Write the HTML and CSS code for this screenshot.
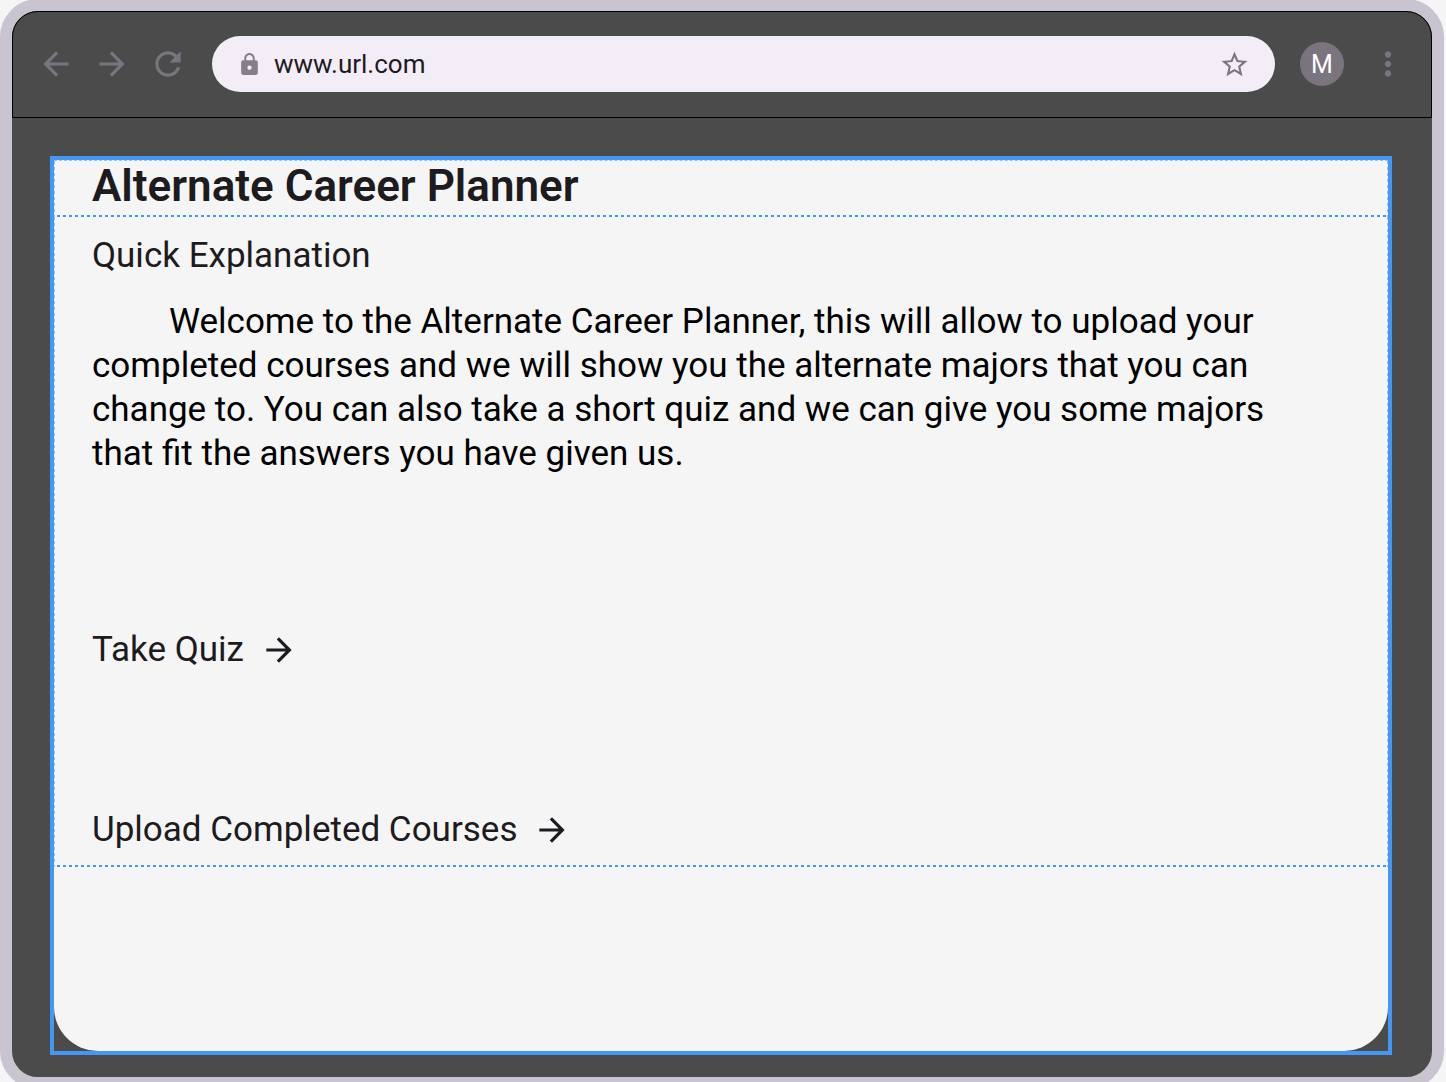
FILE: index.html
```html
<!DOCTYPE html>
<html lang="en">
<head>
<meta charset="utf-8">
<title>Alternate Career Planner</title>
<link rel="stylesheet" href="styles.css">
</head>
<body>
<div class="browser">
  <header class="toolbar">
    <nav class="nav" aria-label="Browser">
      <button class="icon-button" type="button" aria-label="Back"><svg class="icon" viewBox="0 0 24 24"><path d="M20 11H7.83l5.59-5.59L12 4l-8 8 8 8 1.41-1.41L7.83 13H20v-2z"/></svg></button>
      <button class="icon-button" type="button" aria-label="Forward"><svg class="icon" viewBox="0 0 24 24"><path d="M12 4l-1.41 1.41L16.17 11H4v2h12.17l-5.58 5.59L12 20l8-8z"/></svg></button>
      <button class="icon-button" type="button" aria-label="Reload"><svg class="icon" viewBox="0 0 24 24"><path d="M17.65 6.35C16.2 4.9 14.21 4 12 4c-4.42 0-7.99 3.58-7.99 8s3.57 8 7.99 8c3.73 0 6.84-2.55 7.73-6h-2.08c-.82 2.33-3.04 4-5.65 4-3.31 0-6-2.69-6-6s2.69-6 6-6c1.66 0 3.14.69 4.22 1.78L13 11h7V4l-2.35 2.35z"/></svg></button>
    </nav>
    <div class="address">
      <svg class="lock" viewBox="0 0 24 24"><path d="M18 8h-1V6c0-2.76-2.24-5-5-5S7 3.24 7 6v2H6c-1.1 0-2 .9-2 2v10c0 1.1.9 2 2 2h12c1.1 0 2-.9 2-2V10c0-1.1-.9-2-2-2zm-6 9c-1.1 0-2-.9-2-2s.9-2 2-2 2 .9 2 2-.9 2-2 2zm3.1-9H8.9V6c0-1.71 1.39-3.1 3.1-3.1s3.1 1.39 3.1 3.1v2z"/></svg>
      <input class="url" type="text" value="www.url.com" aria-label="Address">
      <button class="icon-button" type="button" aria-label="Bookmark"><svg class="star" viewBox="0 0 24 24"><path d="M22 9.24l-7.19-.62L12 2 9.19 8.63 2 9.24l5.46 4.73L5.82 21 12 17.27 18.18 21l-1.63-7.03L22 9.24zM12 15.4l-3.76 2.27 1-4.28-3.32-2.88 4.38-.38L12 6.1l1.71 4.04 4.38.38-3.32 2.88 1 4.28L12 15.4z"/></svg></button>
    </div>
    <button class="avatar" type="button">M</button>
    <button class="icon-button" type="button" aria-label="Menu"><svg class="icon" viewBox="0 0 24 24"><path d="M12 8c1.1 0 2-.9 2-2s-.9-2-2-2-2 .9-2 2 .9 2 2 2zm0 2c-1.1 0-2 .9-2 2s.9 2 2 2 2-.9 2-2-.9-2-2-2zm0 6c-1.1 0-2 .9-2 2s.9 2 2 2 2-.9 2-2-.9-2-2-2z"/></svg></button>
  </header>
  <main class="viewport">
    <div class="page">
      <div class="heading"><h1 class="title">Alternate Career Planner</h1></div>
      <div class="content">
        <h2 class="label">Quick Explanation</h2>
        <p class="intro">Welcome to the Alternate Career Planner, this will allow to upload your completed courses and we will show you the alternate majors that you can change to. You can also take a short quiz and we can give you some majors that fit the answers you have given us.</p>
        <div class="links">
          <a class="link" href="#quiz">Take Quiz <svg class="icon" viewBox="0 0 24 24"><path d="M12 4l-1.41 1.41L16.17 11H4v2h12.17l-5.58 5.59L12 20l8-8z"/></svg></a>
          <a class="link" href="#upload">Upload Completed Courses <svg class="icon" viewBox="0 0 24 24"><path d="M12 4l-1.41 1.41L16.17 11H4v2h12.17l-5.58 5.59L12 20l8-8z"/></svg></a>
        </div>
      </div>
    </div>
  </main>
</div>
</body>
</html>
```
FILE: styles.css
```css
* { box-sizing: border-box; }
html { background: #f5f5f5; }
body {
  margin: 0;
  height: 100vh;
  overflow: hidden;
  font-family: Roboto, "Liberation Sans", sans-serif;
  color: #1d1b20;
}
.browser {
  display: flex;
  flex-direction: column;
  min-height: calc(100vh + 8px);
  margin: -1px 2px 0 0;
  border: 12px solid #cac4d0;
  border-radius: 38px;
  background: #4b4b4b;
}
.toolbar {
  display: flex;
  align-items: flex-start;
  gap: 25px;
  padding: 24px;
  height: 107px;
  border: 1px solid #000;
  border-radius: 26px 26px 0 0;
  color: #79747e;
}
.nav { display: flex; gap: 18px; }
.icon-button {
  display: flex;
  align-items: center;
  height: 56px;
  padding: 0;
  border: 0;
  background: none;
  color: inherit;
}
.icon { width: 38px; height: 38px; fill: currentColor; }
.address {
  flex: 1;
  display: flex;
  align-items: center;
  gap: 12px;
  height: 56px;
  padding: 0 25px;
  border-radius: 28px;
  background: #f3edf7;
}
.lock { width: 25px; height: 25px; fill: #857f8a; }
.url {
  flex: 1;
  min-width: 0;
  padding: 0;
  border: 0;
  background: none;
  font: 26px/36px Roboto, "Liberation Sans", sans-serif;
  color: #1d1b20;
}
.star { width: 31px; height: 31px; fill: currentColor; }
.avatar {
  width: 44px;
  height: 44px;
  margin-top: 6px;
  padding: 2px 0 0;
  border: 0;
  border-radius: 50%;
  background: #79747e;
  color: #fff;
  font: 25px/42px Roboto, "Liberation Sans", sans-serif;
}
.viewport {
  flex: 1;
  display: flex;
  margin: 38px 40px 22px 38px;
  border: 4px solid #4497f7;
}
.page {
  flex: 1;
  border-radius: 0 0 44px 44px;
  background: #f5f5f5;
}
.heading, .content {
  padding: 0 38px;
  background:
    repeating-linear-gradient(90deg, transparent 0 3px, #4497f7 3px 6px) bottom / 100% 2px no-repeat,
    repeating-linear-gradient(#8fc0f7 0 3px, transparent 3px 6px) left / 1px 100% no-repeat,
    repeating-linear-gradient(#8fc0f7 0 3px, transparent 3px 6px) right / 1px 100% no-repeat;
}
.heading {
  height: 57px;
  border-top: 1px dashed #8fc0f7;
}
.title { margin: 0; font-size: 44px; line-height: 50px; font-weight: 600; }
.content { padding-top: 17px; padding-bottom: 15px; }
.label { margin: 0; font-size: 35px; line-height: 44px; font-weight: 400; }
.intro {
  max-width: 1180px;
  margin: 22px 0 0;
  font-size: 35px;
  line-height: 44px;
  text-indent: 77px;
  color: #000;
}
.links {
  display: flex;
  flex-direction: column;
  align-items: flex-start;
  gap: 136px;
  margin-top: 152px;
}
.link {
  display: flex;
  align-items: center;
  gap: 16px;
  font-size: 35px;
  line-height: 44px;
  color: inherit;
  text-decoration: none;
}
```
